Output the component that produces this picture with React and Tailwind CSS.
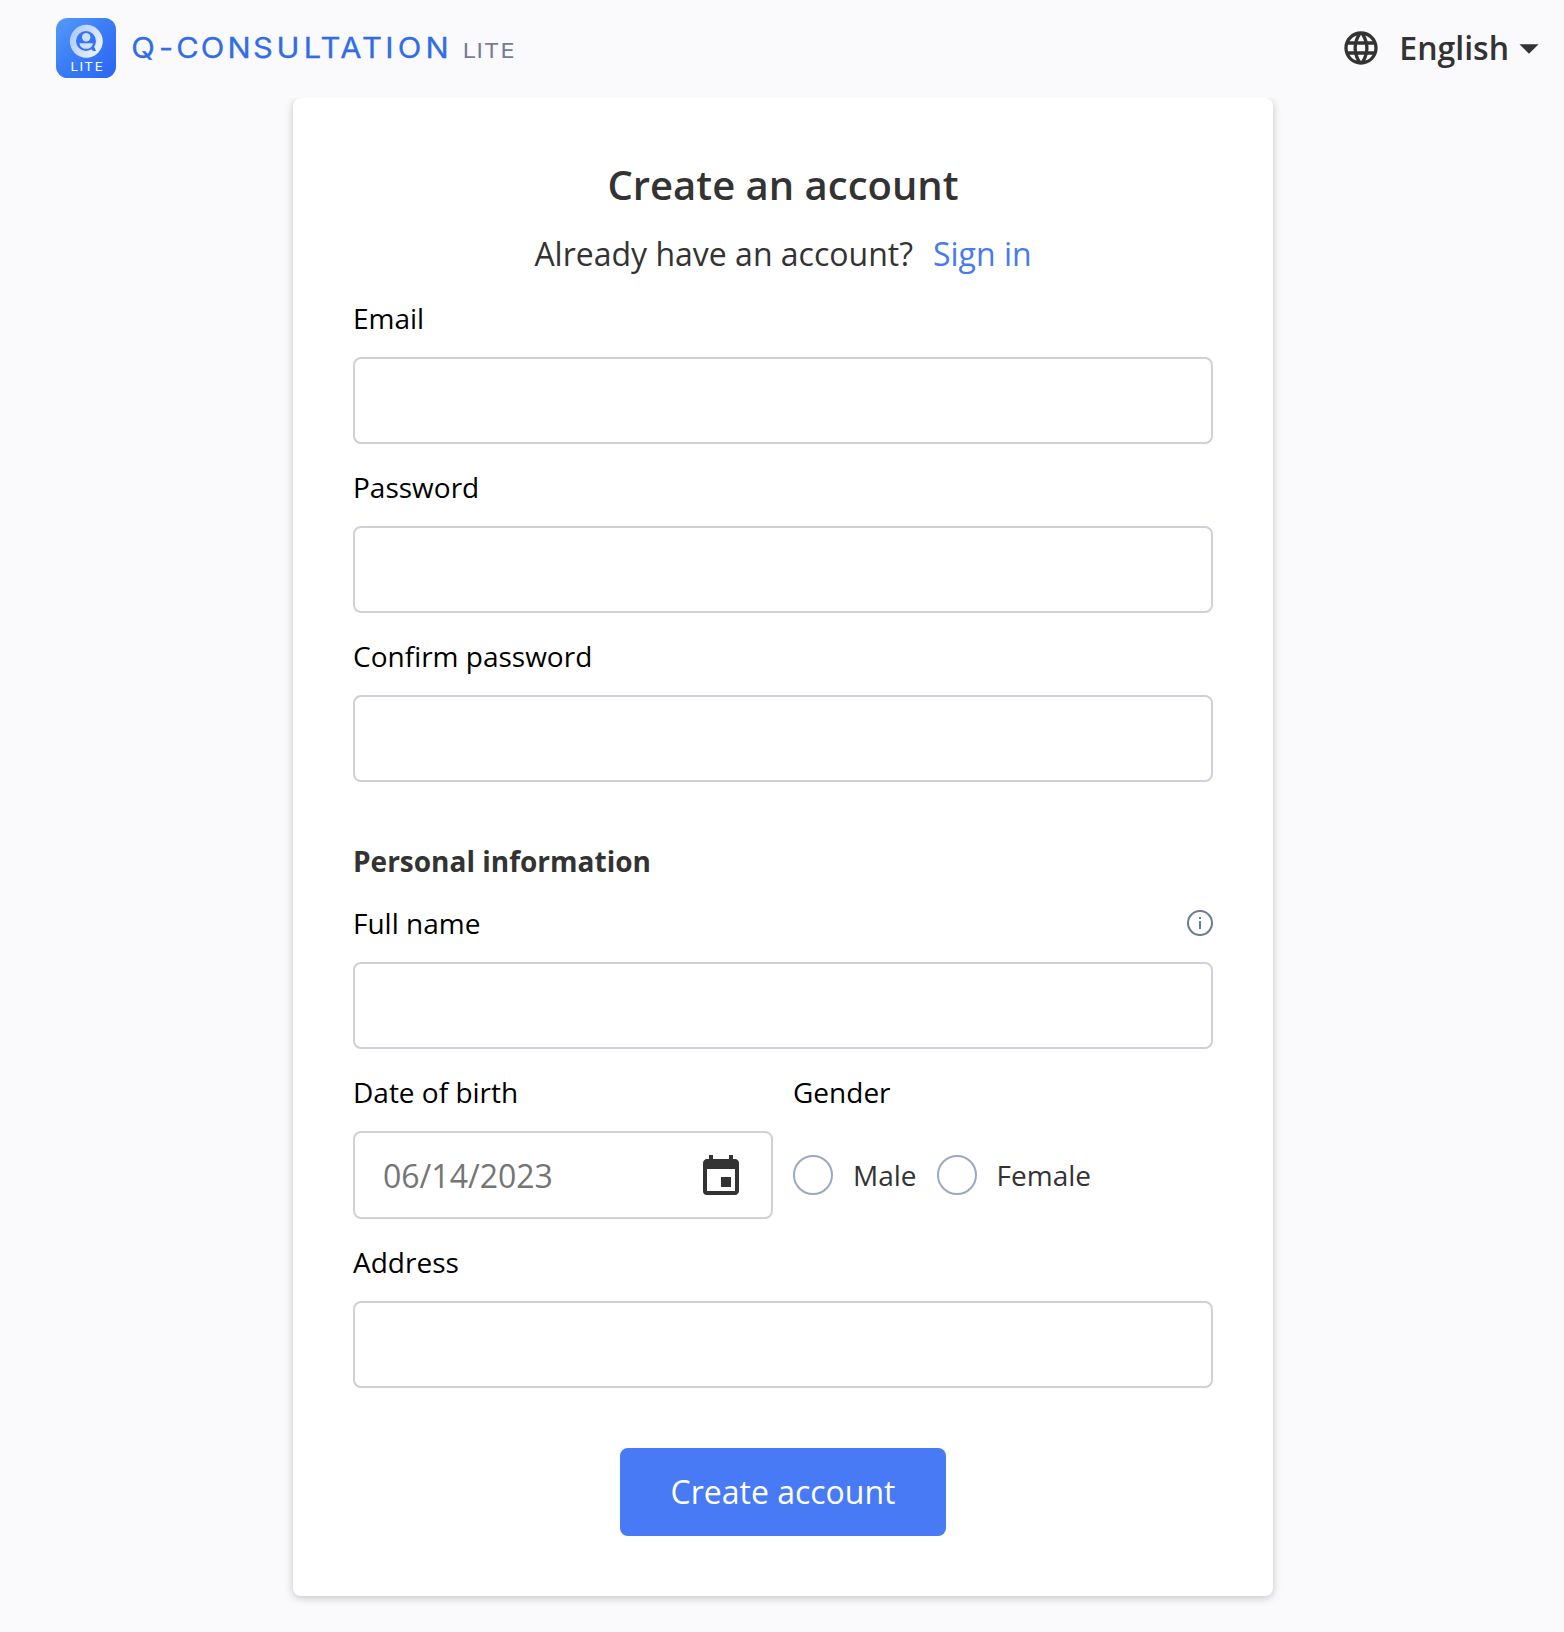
import React from "react";
import { MdLanguage, MdEvent, MdArrowDropDown } from "react-icons/md";

function LogoMark() {
  return (
    <svg width="60" height="60" viewBox="0 0 60 60">
      <defs>
        <linearGradient id="tile" x1="0" y1="0" x2="1" y2="1">
          <stop offset="0" stopColor="#549af9" />
          <stop offset="0.5" stopColor="#3a7bf7" />
          <stop offset="1" stopColor="#2a66f4" />
        </linearGradient>
        <linearGradient id="ring" x1="0" y1="0.2" x2="1" y2="0.8">
          <stop offset="0" stopColor="#a9c8fd" />
          <stop offset="1" stopColor="#f2f6ff" />
        </linearGradient>
      </defs>
      <rect width="60" height="60" rx="11.5" fill="url(#tile)" />
      <circle cx="30.3" cy="23.3" r="16.5" fill="url(#ring)" />
      <circle cx="30" cy="23" r="10" fill="#3575f3" />
      <path d="M34 30l3.5-3 2.500 6h-3z" fill="#3575f3" />
      <circle cx="30.2" cy="19.2" r="4.2" fill="#cfe0fe" />
      <path d="M23.6 25.2h13.2c0 3.5-3 5.6-6.6 5.6s-6.6-2.1-6.6-5.6z" fill="#cfe0fe" />
      <text transform="scale(1.15 1)" x="15.9 22 28.4 37.2" y="53.1" fontSize="11.7" textAnchor="middle" className="fill-white font-['Inter',sans-serif]">LITE</text>
    </svg>
  );
}

function Wordmark() {
  return (
    <svg width="390" height="40" viewBox="130 28 390 40" textAnchor="middle" className="font-['Inter',sans-serif]">
      <text transform="scale(1.1 1)" x="130 150.9 170.5 193.2 217.3 239.1 261.8 284.1 300.5 319.1 338.2 354.1 372.3 397.3" y="58" fontSize="28" fontWeight="400" fill="#316de6" stroke="#316de6" strokeWidth="0.3">
        Q-CONSULTATION
      </text>
      <text transform="scale(1.15 1)" x="408.3 417.1 427.4 441.3" y="58" fontSize="20.5" fill="#747d93">
        LITE
      </text>
    </svg>
  );
}

function InfoIcon() {
  return (
    <svg width="26" height="26" viewBox="0 0 26 26" fill="none">
      <circle cx="13" cy="13" r="12" stroke="#6c7a92" strokeWidth="2" />
      <path d="M13 11v8M13 7v2" stroke="#6c7a92" strokeWidth="2" />
    </svg>
  );
}

function Field({ label, icon, className = "", children }) {
  return (
    <div className={className}>
      <div className="flex h-[38px] items-center justify-between text-[28px] leading-[38px] text-black">
        <label>{label}</label>
        {icon}
      </div>
      <div className="mt-5">
        {children || <input className="block h-[87px] w-full rounded-lg border-2 border-[#cfd0d9] bg-white px-7 outline-none" />}
      </div>
    </div>
  );
}

function Radio({ label }) {
  return (
    <label className="flex items-center gap-5 text-[28px] leading-[38px]">
      <span className="size-10 rounded-full border-2 border-[#9ca8c4]" />
      <span>{label}</span>
    </label>
  );
}

export default function App() {
  return (
    <div className="flex h-[1632px] w-[1564px] flex-col overflow-hidden bg-[#fafafc] font-['Open_Sans','Noto_Sans',sans-serif] text-[#333333]">
      <header className="relative z-10 flex h-[98px] shrink-0 items-center justify-between bg-[#fafafc] pb-[2px] pl-14 pr-[16px]">
        <div className="flex items-center gap-[14px]">
          <LogoMark />
          <Wordmark />
        </div>
        <div className="flex items-center">
          <MdLanguage className="size-10" />
          <span className="ml-[18px] text-[32px] font-semibold leading-[44px]">English</span>
          <MdArrowDropDown className="size-[46px] -ml-[3px] -mr-[4px]" />
        </div>
      </header>
      <main className="ml-[293px] h-[1498px] w-[980px] shrink-0 rounded-lg bg-white px-[60px] pt-[60px] shadow-[0_2px_8px_rgba(0,0,0,0.22)]">
        <h1 className="text-center text-[40px] font-semibold leading-[54px]">Create an account</h1>
        <p className="mt-5 flex justify-center gap-5 text-[32px] leading-[44px]">
          <span>Already have an account?</span>
          <a className="text-[#457af2]">Sign in</a>
        </p>
        <Field label="Email" className="mt-[23px]" />
        <Field label="Password" className="mt-6" />
        <Field label="Confirm password" className="mt-6" />
        <h2 className="mt-[60px] text-[28px] font-bold leading-[38px]">Personal information</h2>
        <Field label="Full name" icon={<InfoIcon />} className="mt-6" />
        <div className="mt-6 flex gap-5">
          <Field label="Date of birth" className="w-[420px]">
            <div className="flex h-[88px] items-center justify-between rounded-lg border-2 border-[#cfd0d9] pl-7 pr-[26px] pt-[3px]">
              <span className="pb-[2px] text-[32px] leading-[44px] text-[#757575]">06/14/2023</span>
              <MdEvent className="size-12" />
            </div>
          </Field>
          <Field label="Gender">
            <div className="flex h-[88px] items-center gap-5">
              <Radio label="Male" />
              <Radio label="Female" />
            </div>
          </Field>
        </div>
        <Field label="Address" className="mt-6" />
        <button className="mx-auto mt-[60px] block h-[88px] w-[326px] rounded-lg bg-[#477af4] text-[32px] leading-[44px] text-white">
          Create account
        </button>
      </main>
    </div>
  );
}
